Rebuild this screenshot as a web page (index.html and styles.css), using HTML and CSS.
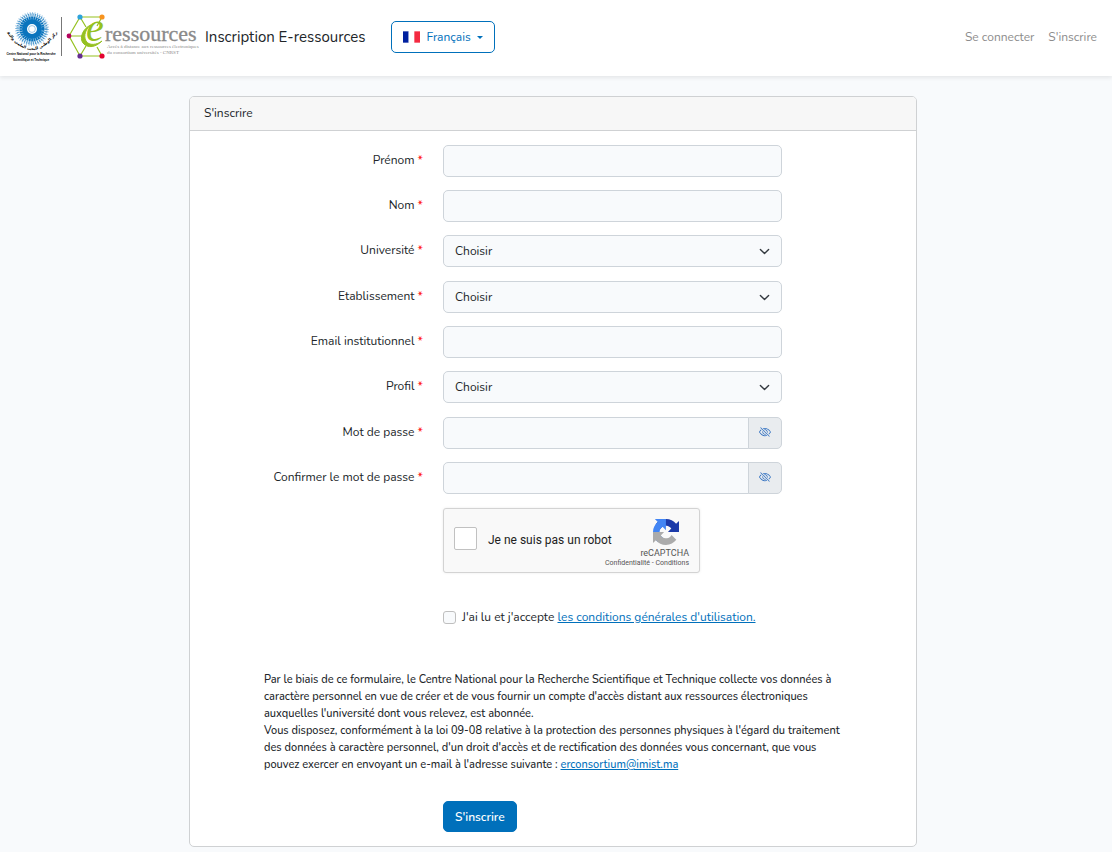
FILE: index.html
```html
<!DOCTYPE html>
<html lang="fr">
<head>
    <meta charset="UTF-8">
    <meta name="viewport" content="width=device-width, initial-scale=1.0">
    <title>Inscription E-ressources</title>
    <link rel="stylesheet" href="styles.css">
</head>
<body>
    <!-- Navbar -->
    <header class="navbar">
        <a class="brand" href="#">
            <svg class="logo" viewBox="0 0 200 56" role="img" aria-label="CNRST E-ressources">
                <!-- CNRST emblem -->
                <g fill="none" stroke="#0a74bd">
                    <circle cx="32" cy="20" r="7.5" stroke-width="5"/>
                    <circle cx="32" cy="20" r="11" stroke-width="3" stroke-dasharray="1.9 0.4"/>
                    <circle cx="32" cy="20" r="14" stroke-width="3" stroke-dasharray="1.3 0.9" opacity="0.7"/>
                    <circle cx="32" cy="20" r="16" stroke-width="2" stroke-dasharray="1 1.5" opacity="0.4"/>
                    <circle cx="32" cy="20" r="3.4" stroke-width="1" opacity="0.4"/>
                </g>
                <path id="arc" d="M7 24Q32 58 57 24" fill="none"/>
                <text class="logo-arabic" direction="rtl"><textPath href="#arc" startOffset="50%" text-anchor="middle">المركز الوطني للبحث العلمي والتقني</textPath></text>
                <text class="logo-small" x="31" y="46" text-anchor="middle">Centre National pour la Recherche</text>
                <text class="logo-small" x="31" y="52" text-anchor="middle">Scientifique et Technique</text>
                <path d="M61.5 8v39" stroke="#777" stroke-width="1"/>
                <!-- E-ressources -->
                <path d="M102 8H80L69 27L80 47H102M80 8L86 18M102 8L97 17M69 27H82M80 47L86 37M102 47L97 38" fill="none" stroke="#95c11f" stroke-width="1.2"/>
                <path d="M91 16C83 19 79 29 83 34C88 40 96 38 102 32C97 36 89 37 86 32C83 27 86 19 91 16Z" fill="#95c11f" stroke="#95c11f" stroke-width="1"/>
                <circle cx="80" cy="8" r="2.6" fill="#2ea3dc"/>
                <circle cx="102" cy="8" r="2.6" fill="#f7931e"/>
                <circle cx="69" cy="27" r="2.4" fill="#b5045f"/>
                <circle cx="80" cy="47" r="2.6" fill="#662d91"/>
                <circle cx="102" cy="47" r="2.6" fill="#e4032e"/>
                <text class="logo-e" x="86" y="32">e</text>
                <text class="logo-name" x="105" y="32">ressources</text>
                <text class="logo-tag" x="107" y="39">Accès à distance aux ressources électroniques</text>
                <text class="logo-tag" x="107" y="45">du consortium universités - CNRST</text>
            </svg>
            <span>Inscription E-ressources</span>
        </a>
        <button class="lang-button" type="button">
            <svg class="flag" viewBox="0 0 18 12" aria-hidden="true">
                <path fill="#00209f" d="M0 0h6v12H0z"/>
                <path fill="#fff" d="M6 0h6v12H6z"/>
                <path fill="#f42a41" d="M12 0h6v12h-6z"/>
            </svg>
            Français
            <span class="caret"></span>
        </button>
        <nav class="nav-links">
            <a href="#">Se connecter</a>
            <a href="#">S'inscrire</a>
        </nav>
    </header>

    <main>
        <section class="card">
            <h1 class="card-header">S'inscrire</h1>
            <form class="card-body">
                <div class="form-row">
                    <label for="prenom">Prénom <span class="required">*</span></label>
                    <input class="field" type="text" id="prenom">
                </div>
                <div class="form-row">
                    <label for="nom">Nom <span class="required">*</span></label>
                    <input class="field" type="text" id="nom">
                </div>
                <div class="form-row select-row">
                    <label for="universite">Université <span class="required">*</span></label>
                    <select class="field" id="universite"><option>Choisir</option></select>
                </div>
                <div class="form-row">
                    <label for="etablissement">Etablissement <span class="required">*</span></label>
                    <select class="field" id="etablissement"><option>Choisir</option></select>
                </div>
                <div class="form-row">
                    <label for="email">Email institutionnel <span class="required">*</span></label>
                    <input class="field" type="email" id="email">
                </div>
                <div class="form-row select-row">
                    <label for="profil">Profil <span class="required">*</span></label>
                    <select class="field" id="profil"><option>Choisir</option></select>
                </div>
                <div class="form-row">
                    <label for="password">Mot de passe <span class="required">*</span></label>
                    <div class="input-group">
                        <input class="field" type="password" id="password">
                        <button class="eye-button" type="button" aria-label="Afficher le mot de passe">
                            <svg viewBox="0 0 16 16"><use href="#eye-slash"/></svg>
                        </button>
                    </div>
                </div>
                <div class="form-row">
                    <label for="confirm">Confirmer le mot de passe <span class="required">*</span></label>
                    <div class="input-group">
                        <input class="field" type="password" id="confirm">
                        <button class="eye-button" type="button" aria-label="Afficher le mot de passe">
                            <svg viewBox="0 0 16 16"><use href="#eye-slash"/></svg>
                        </button>
                    </div>
                </div>

                <!-- Captcha -->
                <div class="form-row captcha-row">
                    <div class="captcha">
                        <input type="checkbox" id="robot">
                        <label for="robot">Je ne suis pas un robot</label>
                        <div class="captcha-brand">
                            <svg viewBox="0 0 64 64" aria-hidden="true">
                                <path fill="#1c3aa9" d="M64 31.955l-.033-1.37V4.687l-7.16 7.16C50.948 4.674 42.033.093 32.05.093c-10.4 0-19.622 4.96-25.458 12.64l11.736 11.86a15.55 15.55 0 0 1 4.754-5.334c2.05-1.6 4.952-2.906 8.968-2.906.485 0 .86.057 1.135.163 4.976.393 9.288 3.14 11.828 7.124l-8.307 8.307L64 31.953"/>
                                <path fill="#4285f4" d="M31.862.094l-1.37.033H4.594l7.16 7.16C4.58 13.147 0 22.06 0 32.046c0 10.4 4.96 19.622 12.64 25.458L24.5 45.768a15.55 15.55 0 0 1-5.334-4.754c-1.6-2.05-2.906-4.952-2.906-8.968 0-.485.057-.86.163-1.135.393-4.976 3.14-9.288 7.124-11.828l8.307 8.307L31.86.095"/>
                                <path fill="#ababab" d="M.001 32.045l.033 1.37v25.898l7.16-7.16c5.86 7.173 14.774 11.754 24.76 11.754 10.4 0 19.622-4.96 25.458-12.64l-11.736-11.86a15.55 15.55 0 0 1-4.754 5.334c-2.05 1.6-4.952 2.906-8.968 2.906-.485 0-.86-.057-1.135-.163-4.976-.393-9.288-3.14-11.828-7.124l8.307-8.307c-10.522.04-22.4.066-27.295-.005"/>
                            </svg>
                            <span class="captcha-name">reCAPTCHA</span>
                            <span class="captcha-links"><a href="#">Confidentialité</a> - <a href="#">Conditions</a></span>
                        </div>
                    </div>
                </div>

                <div class="form-row terms-row">
                    <div class="terms">
                        <input type="checkbox" id="terms">
                        <label for="terms">J'ai lu et j'accepte <a href="#">les conditions générales d'utilisation.</a></label>
                    </div>
                </div>

                <p class="notice">
                    Par le biais de ce formulaire, le Centre National pour la Recherche Scientifique et Technique collecte vos données à<br>
                    caractère personnel en vue de créer et de vous fournir un compte d'accès distant aux ressources électroniques<br>
                    auxquelles l'université dont vous relevez, est abonnée.<br>
                    Vous disposez, conformément à la loi 09-08 relative à la protection des personnes physiques à l'égard du traitement<br>
                    des données à caractère personnel, d'un droit d'accès et de rectification des données vous concernant, que vous<br>
                    pouvez exercer en envoyant un e-mail à l'adresse suivante : <a href="mailto:erconsortium@imist.ma">erconsortium@imist.ma</a>
                </p>

                <div class="form-row submit-row">
                    <button class="submit-button" type="submit">S'inscrire</button>
                </div>
            </form>
        </section>
    </main>

    <svg class="sprite" aria-hidden="true">
        <symbol id="eye-slash" viewBox="0 0 16 16">
            <path d="M13.359 11.238C15.06 9.72 16 8 16 8s-3-5.5-8-5.5a7.028 7.028 0 0 0-2.79.588l.77.771A5.944 5.944 0 0 1 8 3.5c2.12 0 3.879 1.168 5.168 2.457A13.134 13.134 0 0 1 14.828 8c-.058.087-.122.183-.195.288-.335.48-.83 1.12-1.465 1.755-.165.165-.337.328-.517.486l.708.709z"/>
            <path d="M11.297 9.176a3.5 3.5 0 0 0-4.474-4.474l.823.823a2.5 2.5 0 0 1 2.829 2.829l.822.822zm-2.943 1.299.822.822a3.5 3.5 0 0 1-4.474-4.474l.823.823a2.5 2.5 0 0 0 2.829 2.829z"/>
            <path d="M3.35 5.47c-.18.16-.353.322-.518.487A13.134 13.134 0 0 0 1.172 8l.195.288c.335.48.83 1.12 1.465 1.755C4.121 11.332 5.881 12.5 8 12.5c.716 0 1.39-.133 2.02-.36l.77.772A7.029 7.029 0 0 1 8 13.5C3 13.5 0 8 0 8s.939-1.721 2.641-3.238l.708.709zm10.296 8.884-12-12 .708-.708 12 12-.708.708z"/>
        </symbol>
    </svg>
</body>
</html>
```
FILE: styles.css
```css
/* General Styles */
* {
    box-sizing: border-box;
}

body {
    font-family: Nunito, Lato, sans-serif;
    font-size: 12px;
    line-height: 20px;
    background-color: #f8fafc;
    color: #212529;
    margin: 0;
}

input,
select,
button {
    font: inherit;
    color: inherit;
    margin: 0;
}

a {
    color: #0070bb;
}

.sprite {
    display: none;
}

/* Navbar */
.navbar {
    display: flex;
    align-items: center;
    min-height: 76px;
    padding: 0 15px 2px 0;
    background-color: white;
    box-shadow: 0 2px 4px rgba(0, 0, 0, 0.08);
}

.brand {
    display: flex;
    align-items: center;
    gap: 5px;
    font-size: 15px;
    color: #212529;
    text-decoration: none;
}

.logo {
    width: 200px;
    height: 56px;
    overflow: visible;
}

.logo-arabic {
    font-family: "DejaVu Sans", sans-serif;
    font-size: 4px;
    font-weight: bold;
}

.logo-small {
    font-family: "Liberation Sans", sans-serif;
    font-size: 3px;
    font-weight: bold;
}

.logo-e {
    font-family: "Liberation Serif", serif;
    font-size: 40px;
    font-style: italic;
    fill: #95c11f;
}

.logo-name {
    font-family: "Liberation Serif", serif;
    font-size: 22px;
    fill: #8a8a8a;
    stroke: #8a8a8a;
    stroke-width: 0.3px;
}

.logo-tag {
    font-family: "Liberation Serif", serif;
    font-size: 5px;
    fill: #8a8a8a;
}

.lang-button {
    display: flex;
    align-items: center;
    gap: 6px;
    height: 32px;
    margin-left: 26px;
    padding: 0 11px;
    background-color: white;
    color: #0070bb;
    border: 1px solid #0070bb;
    border-radius: 5px;
}

.flag {
    width: 17px;
    height: 12px;
}

.caret {
    border: 3px solid transparent;
    border-top-color: #0070bb;
    border-bottom: 0;
}

.nav-links {
    display: flex;
    gap: 14px;
    margin-left: auto;
}

.nav-links a {
    color: #8c8c8c;
    text-decoration: none;
}

/* Card */
main {
    padding: 20px 6px 5px 0;
}

.card {
    max-width: 728px;
    margin: 0 auto;
    background-color: white;
    border: 1px solid #cfd1d3;
    border-radius: 5px;
}

.card-header {
    margin: 0;
    padding: 6px 14px 7px;
    font-size: 12px;
    font-weight: 400;
    background-color: #f7f7f7;
    border-bottom: 1px solid #cfd1d3;
    border-radius: 4px 4px 0 0;
}

.card-body {
    padding: 14px;
}

/* Form */
.form-row {
    display: grid;
    grid-template-columns: 219fr 339fr 100fr;
    column-gap: 20px;
    margin-bottom: 13px;
}

.select-row {
    margin-bottom: 14px;
}

.form-row > label {
    padding-top: 5px;
    text-align: right;
}

.form-row > :not(label) {
    grid-column: 2;
}

.required {
    color: red;
}

.field {
    width: 100%;
    height: 32px;
    padding: 0 11px;
    background-color: #f8fafc;
    border: 1px solid #ced4da;
    border-radius: 5px;
}

select.field {
    appearance: none;
    background-image: url("data:image/svg+xml,%3Csvg xmlns='http://www.w3.org/2000/svg' viewBox='0 0 16 16'%3E%3Cpath fill='none' stroke='%23343a40' stroke-linecap='round' stroke-linejoin='round' stroke-width='2' d='m2 5 6 6 6-6'/%3E%3C/svg%3E");
    background-repeat: no-repeat;
    background-position: right 11px center;
    background-size: 11px 11px;
}

.input-group {
    display: flex;
}

.input-group .field {
    flex: 1;
    min-width: 0;
    border-radius: 5px 0 0 5px;
}

.eye-button {
    width: 34px;
    margin-left: -1px;
    padding: 0 0 3px;
    background-color: #e9ecef;
    border: 1px solid #ced4da;
    border-radius: 0 5px 5px 0;
}

.eye-button svg {
    display: block;
    width: 12px;
    height: 12px;
    margin: 0 auto;
    fill: #2f6fc0;
}

/* Captcha */
.captcha-row {
    margin-top: 14px;
}

.captcha {
    display: flex;
    align-items: center;
    width: 257px;
    height: 65px;
    padding: 0 10px;
    font-family: Roboto, sans-serif;
    background-color: #f9f9f9;
    border: 1px solid #d3d3d3;
    border-radius: 3px;
    box-shadow: 0 0 3px rgba(0, 0, 0, 0.08);
}

.captcha input {
    appearance: none;
    flex: none;
    width: 23px;
    height: 23px;
    margin-bottom: 4px;
    background-color: white;
    border: 1px solid #c1c1c1;
    border-radius: 2px;
}

.captcha label {
    margin: 0 0 2px 11px;
    white-space: nowrap;
    color: #222;
}

.captcha-brand {
    display: flex;
    flex-direction: column;
    align-items: flex-end;
    flex: 1;
    width: 0;
    padding-top: 4px;
    color: #555;
}

.captcha-brand svg {
    width: 26px;
    height: 26px;
    margin: 0 10px 3px 0;
}

.captcha-name {
    font-size: 9px;
    line-height: 11px;
}

.captcha-links {
    font-size: 7px;
    line-height: 8px;
    white-space: nowrap;
}

.captcha-links a {
    color: inherit;
    text-decoration: none;
}

/* Terms */
.terms-row {
    margin-top: 34px;
}

.terms {
    display: flex;
    align-items: center;
    gap: 6px;
}

.terms input {
    appearance: none;
    width: 13px;
    height: 13px;
    background-color: #f8fafc;
    border: 1px solid #bfbfbf;
    border-radius: 3px;
}

.notice {
    margin: 44px 60px 0;
    font-size: 11px;
    font-weight: 500;
    line-height: 17px;
    white-space: nowrap;
}

.submit-row {
    margin: 28px 0 0;
}

.submit-button {
    justify-self: start;
    height: 31px;
    padding: 0 11px;
    font-weight: 600;
    color: white;
    background-color: #0070bb;
    border: 1px solid #0070bb;
    border-radius: 5px;
}
```
